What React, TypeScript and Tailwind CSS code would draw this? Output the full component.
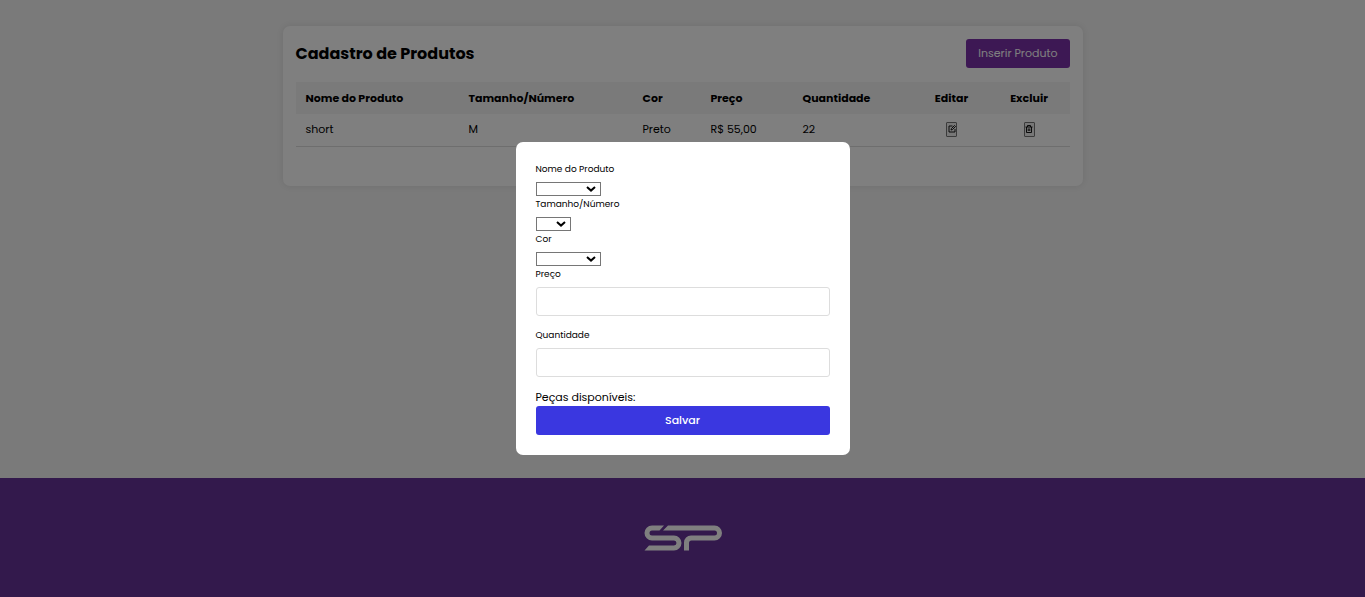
import { useState } from "react";
import type { ReactNode } from "react";

const products = [
  { name: "short", size: "M", color: "Preto", price: "R$ 55,00", quantity: 22 },
];

function EditIcon() {
  return (
    <svg viewBox="0 0 16 16" className="size-2" fill="none" stroke="currentColor" strokeWidth="1.8" aria-hidden="true">
      <path d="M9 2H2v12h12V8" />
      <path d="M6 10l1-3 6-6 2 2-6 6z" />
    </svg>
  );
}

function TrashIcon() {
  return (
    <svg viewBox="0 0 16 16" className="size-2" fill="none" stroke="currentColor" strokeWidth="1.8" aria-hidden="true">
      <path d="M1 4h14M5 4V1h6v3M3 4v11h10V4M6.500 7v5M9.500 7v5" />
    </svg>
  );
}

function Logo() {
  return (
    <svg viewBox="0 0 78 26" className="h-[26px] w-[78px]" fill="#ffffff" role="img" aria-label="SP">
      <path d="M20 0.500H8a7.500 7.500 0 0 0 0 15H30a2.500 2.500 0 0 1 0 5H5L0.500 25.500H30a7.500 7.500 0 0 0 0-15H8a2.500 2.500 0 0 1 0-5H15.500z" />
      <path d="M24 0.500H70.500a7.500 7.500 0 0 1 0 15H47.500a2.500 2.500 0 0 0-2.500 2.500V25.500H40V17.500a7 7 0 0 1 7-7H70.500a2.500 2.500 0 0 0 0-5H19z" />
    </svg>
  );
}

const labelStyle = "mb-[5px] block text-[9px] leading-[15px]";

function SelectField({ id, label, wide, options }: { id: string; label: string; wide?: boolean; options: string[] }) {
  return (
    <div className="mb-px">
      <label htmlFor={id} className={labelStyle}>{label}</label>
      <div className={`relative ${wide ? "w-[65px]" : "w-[35px]"}`}>
        <select
          id={id}
          defaultValue=""
          className="block h-[14px] w-full appearance-none border border-[#767676] bg-white pl-1 text-[9px] leading-3"
        >
          <option value=""></option>
          {options.map((o) => <option key={o}>{o}</option>)}
        </select>
        <svg viewBox="0 0 10 6" className="pointer-events-none absolute top-1 right-[5px] h-[6px] w-[10px]" fill="none" stroke="#000000" strokeWidth="2" aria-hidden="true">
          <path d="M1 1l4 3.600L9 1" />
        </svg>
      </div>
    </div>
  );
}

function TextField({ id, label }: { id: string; label: string }) {
  return (
    <div className="mb-3">
      <label htmlFor={id} className={labelStyle}>{label}</label>
      <input id={id} type="text" className="block h-[29px] w-full rounded-[3px] border border-[#dddddd] bg-white px-2 text-[11px]" />
    </div>
  );
}

function IconButton({ label, children }: { label: string; children: ReactNode }) {
  return (
    <button type="button" aria-label={label} className="mx-auto flex h-[15px] w-[11px] justify-center rounded-[1px] border border-[#767676] bg-[#efefef] pt-[2px]">
      {children}
    </button>
  );
}

export default function App() {
  const [open, setOpen] = useState(true);
  return (
    <div className="flex min-h-screen flex-col bg-[#f5f5f5] font-[Poppins,Inter,sans-serif] text-[11px] leading-[15px] text-black">
      <main className="flex-1 px-4 pt-[26px]">
        <section className="mx-auto max-w-[800px] rounded-[7px] bg-white p-[13px] pb-[39px] shadow-[0_0_8px_rgba(0,0,0,0.1)]">
          <div className="mb-[14px] flex items-center justify-between">
            <h1 className="text-[16px] leading-[29px] font-bold">Cadastro de Produtos</h1>
            <button type="button" onClick={() => setOpen(true)} className="h-[29px] rounded-[3px] bg-[#7a30a8] px-3 text-white">
              Inserir Produto
            </button>
          </div>
          <table className="w-full table-fixed border-collapse text-left">
            <colgroup>
              <col className="w-[163px]" />
              <col className="w-[174px]" />
              <col className="w-[68px]" />
              <col className="w-[92px]" />
              <col className="w-[122px]" />
              <col className="w-[74px]" />
              <col />
            </colgroup>
            <thead className="bg-[#f5f5f5]">
              <tr className="h-8">
                <th className="px-[10px]">Nome do Produto</th>
                <th className="px-[10px]">Tamanho/Número</th>
                <th className="px-[10px]">Cor</th>
                <th className="px-[10px]">Preço</th>
                <th className="px-[10px]">Quantidade</th>
                <th className="px-[10px] text-center">Editar</th>
                <th className="px-[10px] text-center">Excluir</th>
              </tr>
            </thead>
            <tbody>
              {products.map((p) => (
                <tr key={p.name} className="h-8 border-b border-[#dddddd]">
                  <td className="px-[10px]">{p.name}</td>
                  <td className="px-[10px]">{p.size}</td>
                  <td className="px-[10px]">{p.color}</td>
                  <td className="px-[10px]">{p.price}</td>
                  <td className="px-[10px]">{p.quantity}</td>
                  <td className="px-[10px]"><IconButton label="Editar"><EditIcon /></IconButton></td>
                  <td className="px-[10px]"><IconButton label="Excluir"><TrashIcon /></IconButton></td>
                </tr>
              ))}
            </tbody>
          </table>
        </section>
      </main>
      <footer className="flex justify-center bg-[#663399] pt-[47px] pb-[46px]">
        <Logo />
      </footer>
      {open && (
        <div className="fixed inset-0 flex items-center justify-center bg-black/50" onClick={() => setOpen(false)}>
          <form
            role="dialog"
            aria-label="Produto"
            onClick={(e) => e.stopPropagation()}
            onSubmit={(e) => e.preventDefault()}
            className="w-full max-w-[334px] rounded-[7px] bg-white p-5"
          >
            <SelectField id="nome" label="Nome do Produto" wide options={["short"]} />
            <SelectField id="tamanho" label="Tamanho/Número" options={["M"]} />
            <SelectField id="cor" label="Cor" wide options={["Preto"]} />
            <TextField id="preco" label="Preço" />
            <TextField id="quantidade" label="Quantidade" />
            <p className="leading-[17px]">Peças disponíveis:</p>
            <button type="submit" className="block h-[29px] w-full rounded-[3px] bg-[#3a37e0] font-medium text-white">
              Salvar
            </button>
          </form>
        </div>
      )}
    </div>
  );
}
